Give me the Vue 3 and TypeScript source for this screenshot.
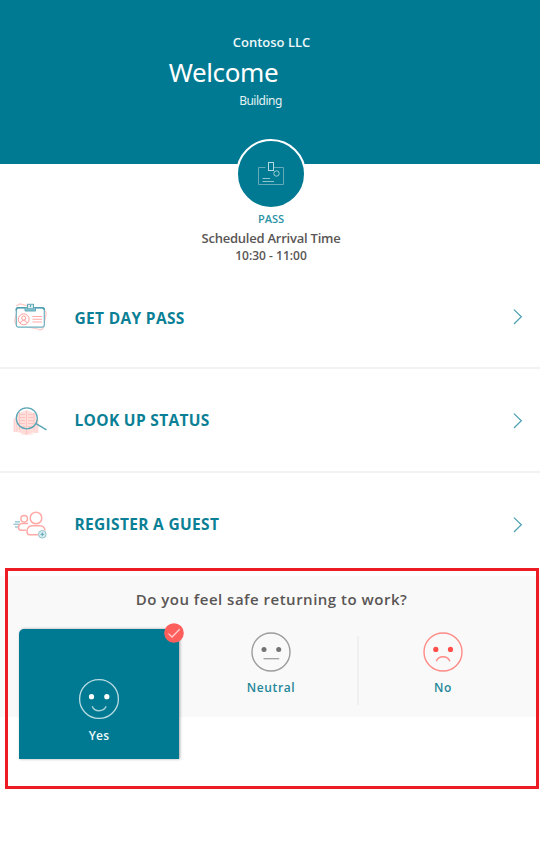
<script setup lang="ts">
interface MenuItem {
  id: 'day-pass' | 'status' | 'guest'
  label: string
}

const menu: MenuItem[] = [
  { id: 'day-pass', label: 'GET DAY PASS' },
  { id: 'status', label: 'LOOK UP STATUS' },
  { id: 'guest', label: 'REGISTER A GUEST' },
]
</script>

<template>
  <main class="page">
    <header class="hero">
      <div class="company"><span>Contoso LLC</span></div>
      <h1 class="welcome"><span>Welcome</span></h1>
      <div class="building"><span>Building</span></div>
    </header>

    <section class="pass">
      <div class="pass-circle">
        <svg width="28" height="26" viewBox="0 0 28 26" fill="none" stroke="#8fc4cf" stroke-width="1">
          <path d="M8.5 6.5H1.5V23.5H26.5V6.5H17" stroke="#65aab8" />
          <rect x="11.5" y="1.5" width="5" height="8" stroke="#b5dae1" />
          <circle cx="19.5" cy="12.5" r="2.7" stroke="#9fced7" />
          <path d="M5.5 17.5H13M5.5 20.5H17" />
        </svg>
      </div>
      <div class="pass-label"><span>PASS</span></div>
      <div class="arrival"><span>Scheduled Arrival Time</span></div>
      <div class="hours"><span>10:30 - 11:00</span></div>
    </section>

    <nav class="menu">
      <a v-for="item in menu" :key="item.id" class="row" :class="item.id">
        <svg v-if="item.id === 'day-pass'" class="icon" viewBox="0 0 44 36" fill="none">
          <path d="M8 8L12 6L36 12Q39 14 38 17L35 30Q34 33 30 31L9 27Q6 25 7 21L10 9" stroke="#ffc8c5" stroke-width="1.2" />
          <rect x="8.3" y="9.7" width="28" height="19.5" rx="2.2" fill="#fff" stroke="#6cb0bf" stroke-width="1.2" />
          <path d="M8.3 12.5V11.5Q8.3 9.7 10.5 9.7H34Q36.3 9.7 36.3 12" stroke="#4d9eaf" stroke-width="1.5" />
          <path d="M17 9.5H27.5V13H17Z" fill="#8dc4cf" stroke="#5fa9b8" />
          <rect x="19.5" y="6.3" width="6" height="4.5" fill="#d8ecef" stroke="#5fa9b8" />
          <path d="M22.5 7V9" stroke="#5fa9b8" />
          <circle cx="15.7" cy="21.3" r="5.4" stroke="#ff9f9b" />
          <circle cx="15.7" cy="20" r="2" stroke="#ff9f9b" />
          <path d="M12.3 25Q13 22.5 15.7 22.5T19.1 25" stroke="#ff9f9b" />
          <path d="M24.5 18.5H34M24.5 21.2H34M24.5 24H34" stroke="#ffaaa7" stroke-width="1.1" />
        </svg>
        <svg v-else-if="item.id === 'status'" class="icon" viewBox="0 0 44 36" fill="none">
          <path d="M5.5 16H10V30H5.5ZM28 16L30.5 18V31H26Z" fill="#ffe2df" />
          <path d="M9 12L18.5 8L28 12V29L18.5 33L9 29Z" fill="#ffdfdc" />
          <path d="M6.5 18V30M8.5 17V30M29 18V30M10 30H29M13 32H25" stroke="#ffcfcc" stroke-width=".8" />
          <path d="M12 12.5H17M20 12.5H26M12 15.5H17M20 15.5H26M12 18.5H17M20 18.5H26M12 21.5H17M20 21.5H26M12 24.5H17M20 24.5H26M11.5 10V28M18.5 9V32M26 11V28" stroke="#ffbdb9" stroke-width=".8" />
          <circle cx="18.8" cy="16.3" r="10.5" stroke="#5aa6b6" stroke-width="1.3" />
          <path d="M28 21.7L38.5 27.8" stroke="#5aa6b6" stroke-width="1.5" />
        </svg>
        <svg v-else class="icon" viewBox="0 0 44 36" fill="none" stroke="#ffaaa7" stroke-width="1.5">
          <path d="M7 15.7H12M5.5 18.3H11M7 21H10" stroke="#9bcbd5" stroke-width="1.5" />
          <circle cx="16.2" cy="12.7" r="3.3" />
          <path d="M18 24.3H13Q10.5 24 10.5 21.5Q10.5 17.8 14 17.5H20" />
          <circle cx="28" cy="12" r="5.8" />
          <path d="M30 28.7H21Q19 28.3 19 25.5Q19.2 20 24 19.8H32Q36.5 20 37 24.5" />
          <circle cx="34.3" cy="28.3" r="3.8" fill="#d9ecef" stroke="#91c6d0" stroke-width="1" />
          <path d="M32.5 28.3H36.1M34.3 26.5V30.1" stroke="#5fa9b8" stroke-width="1" />
        </svg>
        <span class="row-label">{{ item.label }}</span>
        <svg class="chevron" width="10" height="18" viewBox="0 0 10 18" fill="none">
          <path d="M1 2.6L8.3 9.8L1 17" stroke="#4fa3b3" stroke-width="1.3" />
        </svg>
      </a>
    </nav>

    <section class="survey">
      <h2 class="question"><span>Do you feel safe returning to work?</span></h2>
      <div class="options">
        <div class="option yes">
          <svg class="face" width="42" height="42" viewBox="-21 -21 42 42" fill="none">
            <circle r="19.4" stroke="#b9dce3" stroke-width="1.3" />
            <circle cx="-7.5" cy="-2.3" r="2.6" fill="#fff" />
            <circle cx="7.8" cy="-2.3" r="2.6" fill="#fff" />
            <path d="M-6.8 7.2Q-5 11.7 0 11.7T7.2 7.2" stroke="#a9d3dc" stroke-width="1.4" />
          </svg>
          <div class="answer"><span>Yes</span></div>
          <svg class="badge" width="20" height="20" viewBox="0 0 20 20" fill="none">
            <circle cx="10" cy="10" r="9.8" fill="#ff5f5c" />
            <path d="M4.5 10.6L8 14L15.7 6.3" stroke="#ffd0ce" stroke-width="1.3" />
          </svg>
        </div>
        <div class="option neutral">
          <svg class="face" width="42" height="42" viewBox="-21 -21 42 42" fill="none">
            <circle r="19" stroke="#9c9c9c" stroke-width="1.4" />
            <circle cx="-7" cy="-2.6" r="2.5" fill="#737373" />
            <circle cx="7.7" cy="-2.6" r="2.5" fill="#737373" />
            <path d="M-7.5 6.7H8.2" stroke="#a0a0a0" stroke-width="1.3" />
          </svg>
          <div class="answer"><span>Neutral</span></div>
        </div>
        <div class="divider"></div>
        <div class="option no">
          <svg class="face" width="42" height="42" viewBox="-21 -21 42 42" fill="none">
            <circle r="19" stroke="#ff8b87" stroke-width="1.4" />
            <circle cx="-7.2" cy="-2.6" r="2.6" fill="#ff4f4b" />
            <circle cx="7.5" cy="-2.6" r="2.6" fill="#ff4f4b" />
            <path d="M-6.7 9.3Q-5 4.8 0 4.8T6.9 9.3" stroke="#ff8b87" stroke-width="1.4" />
          </svg>
          <div class="answer"><span>No</span></div>
        </div>
      </div>
    </section>
    <div class="highlight"></div>
  </main>
</template>

<style>
body { margin: 0; background: #fff; }
</style>

<style scoped>
.page {
  position: relative;
  width: 540px;
  height: 850px;
  overflow: hidden;
  background: #fff;
  font-family: "Open Sans", "Noto Sans", sans-serif;
  color: #595655;
}
.hero {
  box-sizing: border-box;
  height: 164px;
  padding-top: 32px;
  background: #007a92;
  color: #fff;
  text-align: center;
}
.company {
  height: 20px;
  padding-left: 3px;
  font-size: 13px;
  line-height: 20px;
  font-weight: 600;
  color: #eef8f9;
}
.welcome {
  margin: 0;
  height: 39px;
  padding-right: 93px;
  font-family: "Noto Sans", sans-serif;
  font-size: 26px;
  line-height: 40px;
  font-weight: 400;
  letter-spacing: -.4px;
}
.building {
  height: 20px;
  padding-right: 19px;
  font-family: "Noto Sans", sans-serif;
  font-size: 12px;
  line-height: 20px;
  letter-spacing: -.5px;
  color: #e4f2f4;
}
.pass {
  display: flex;
  flex-direction: column;
  align-items: center;
  height: 101px;
  padding-left: 2px;
}
.pass-circle {
  display: flex;
  align-items: center;
  justify-content: center;
  flex: none;
  width: 66px;
  height: 66px;
  margin-top: -25px;
  border: 2px solid #fff;
  border-radius: 50%;
  background: #007a92;
}
.pass-label {
  margin-top: 2px;
  font-size: 11px;
  line-height: 16px;
  font-weight: 600;
  color: #2c92a5;
}
.arrival { margin-top: 3px; font-size: 13px; line-height: 17px; font-weight: 600; letter-spacing: -.23px; }
.hours { font-size: 12px; line-height: 17px; font-weight: 600; }
.row {
  display: flex;
  align-items: center;
  box-sizing: border-box;
  height: 104px;
  padding: 0 17px 0 8px;
  border-bottom: 2px solid #f2f2f2;
}
.row.guest { height: 104px; margin-bottom: -1px; border-bottom-color: transparent; }
.icon { width: 44px; height: 36px; flex: none; }
.row-label {
  flex: 1;
  margin-left: 22.5px;
  font-size: 15.5px;
  line-height: 22px;
  font-weight: 700;
  letter-spacing: .32px;
  color: #0b7f95;
}
.row.day-pass .row-label { padding-top: 4px; }
.survey { height: 141px; background: #f9f9f9; }
.question {
  margin: 0;
  padding: 12px 0 0 3px;
  font-size: 15px;
  line-height: 22px;
  font-weight: 600;
  letter-spacing: .5px;
  text-align: center;
}
.options { display: flex; padding-top: 19px; }
.option { text-align: center; }
.face { display: block; margin: 0 auto; }
.yes {
  position: relative;
  box-sizing: border-box;
  width: 160px;
  height: 130px;
  margin-left: 19px;
  padding-top: 49px;
  border-radius: 5px 5px 0 0;
  background: #007a92;
  box-shadow: 1px 0 3px rgba(0, 0, 0, .35);
  color: #fff;
}
.badge { position: absolute; top: -6px; right: -5px; }
.neutral { width: 172px; margin: 1.5px 0 0 6px; }
.divider { width: 2px; height: 69px; margin-top: 7px; background: #f0f0f0; }
.no { width: 168px; margin-top: 1.5px; }
.answer {
  margin-top: 6px;
  font-size: 12px;
  line-height: 18px;
  font-weight: 600;
  letter-spacing: .6px;
  color: #24879a;
}
.yes .answer { margin-top: 7px; letter-spacing: .2px; color: #f0f9fa; }
.highlight {
  position: absolute;
  left: 5px;
  top: 568px;
  box-sizing: border-box;
  width: 534px;
  height: 221px;
  border: 3px solid #ed1c24;
}
</style>
